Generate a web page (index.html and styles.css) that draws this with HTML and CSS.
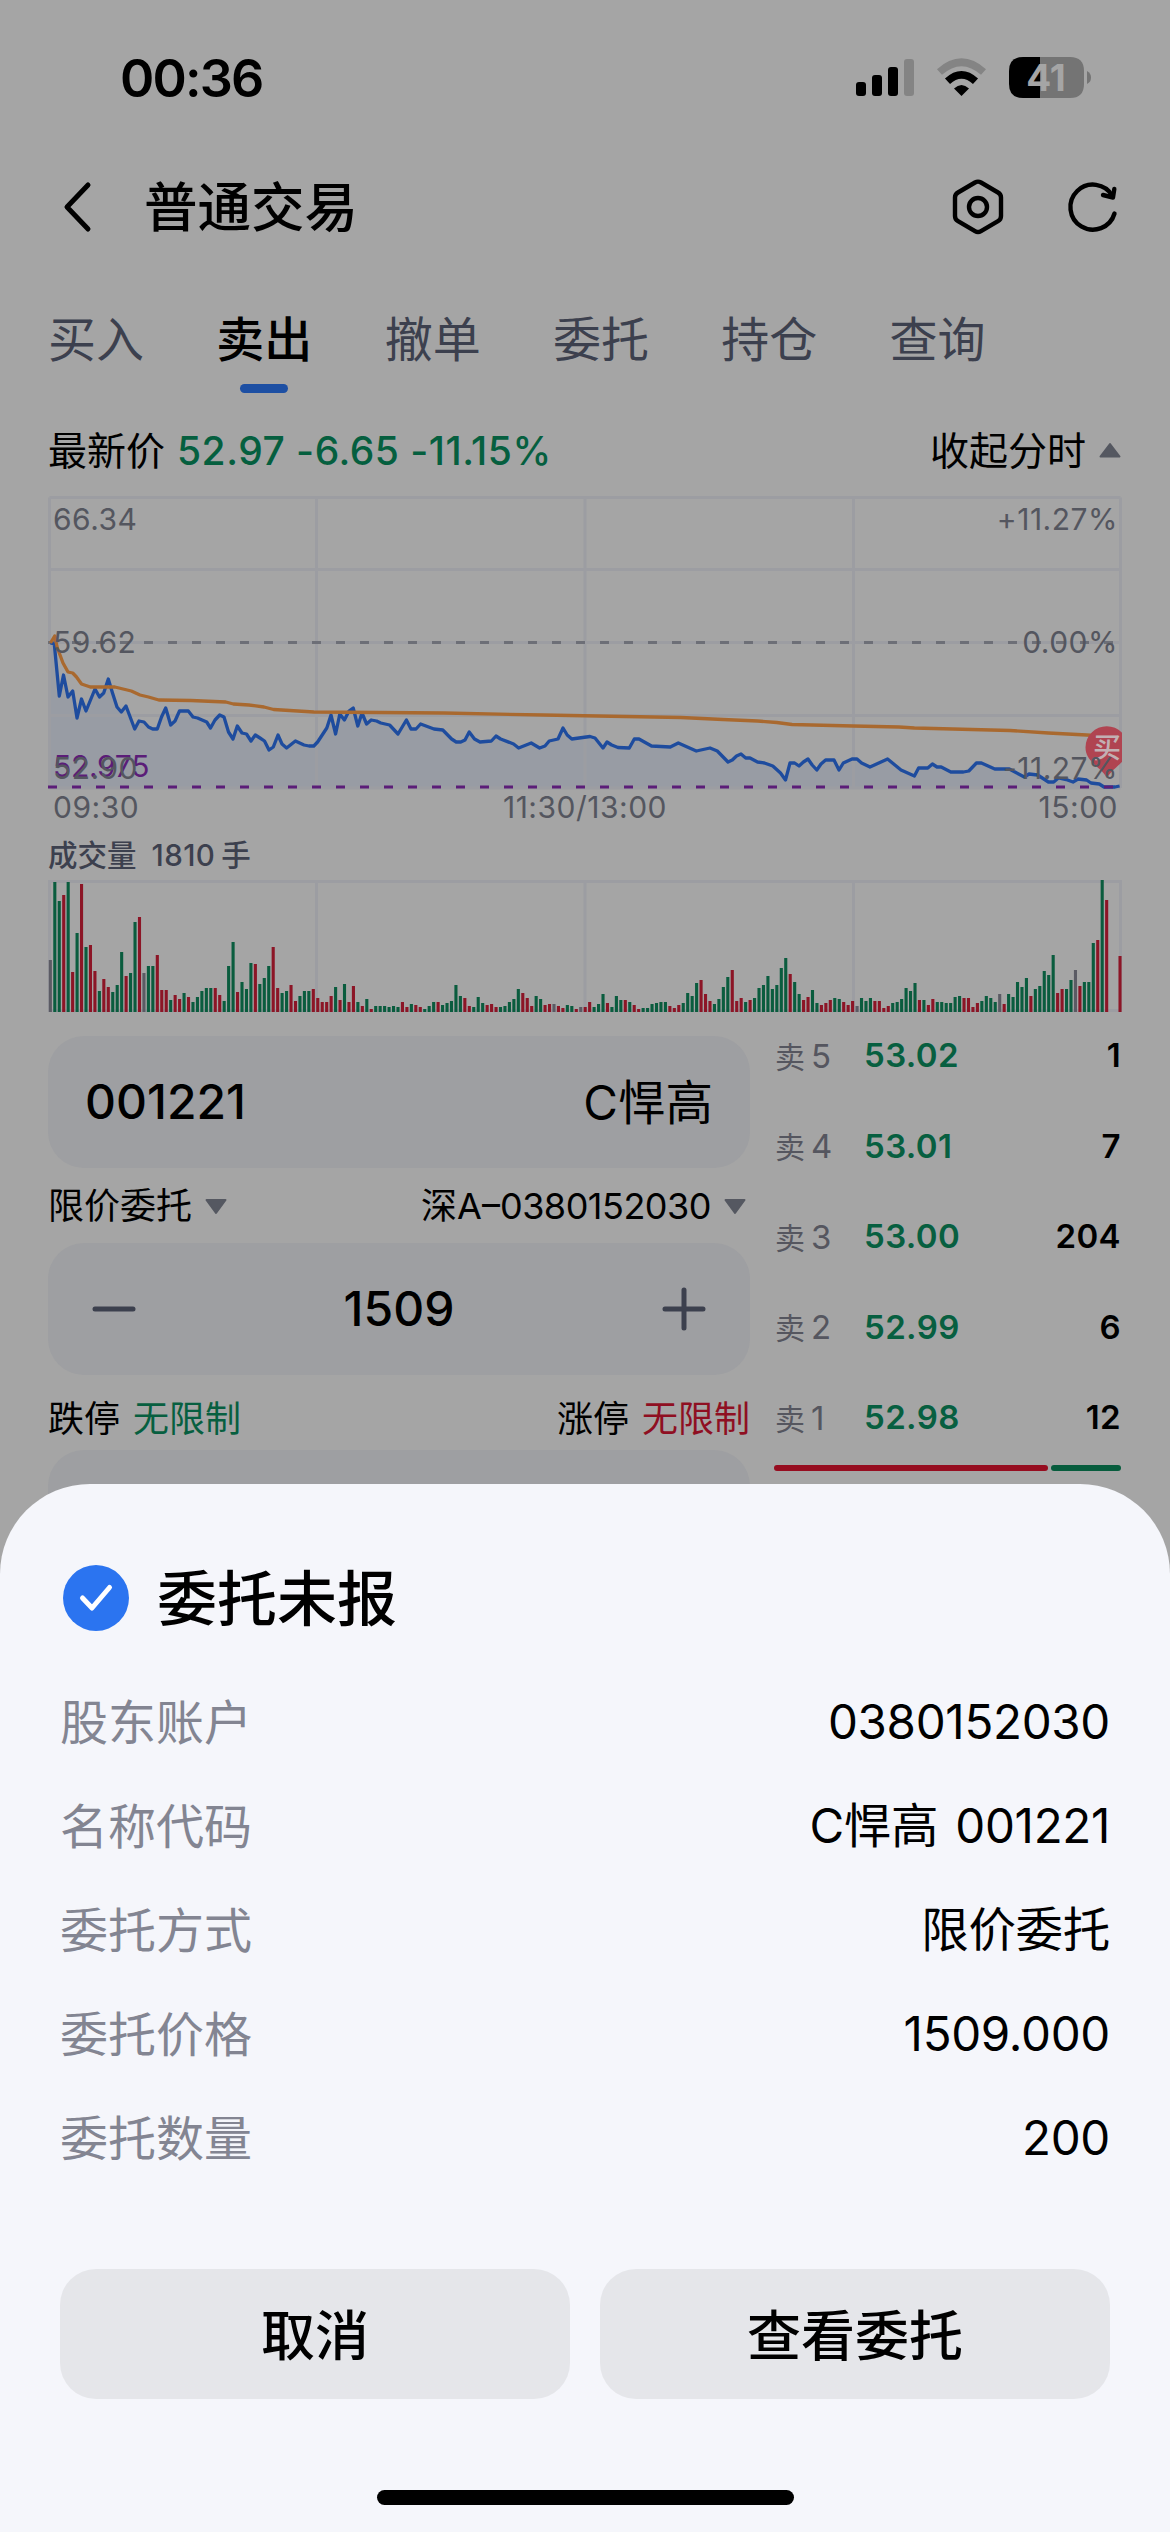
FILE: index.html
```html
<!DOCTYPE html>
<html lang="zh-CN">
<head>
  <meta charset="UTF-8" />
  <title>普通交易</title>
  <link rel="stylesheet" href="styles.css">
</head>
<body>

  <div class="screen">
    <div class="status">
      <span class="time">00:36</span>
      <svg class="status-icons" width="236" height="42" viewBox="856 57 236 42">
        <rect x="856" y="82" width="10" height="14" rx="3" />
        <rect x="872" y="75" width="10" height="21" rx="3" />
        <rect x="888" y="67" width="10" height="29" rx="3" />
        <rect x="904" y="59" width="10" height="37" rx="3" fill="#848484" />
        <path d="M939.5 72 Q961.5 52.500 983.500 72" fill="none" stroke="#848484" stroke-width="7.500" />
        <path d="M947.500 81.200 Q961.500 68.500 975.500 81.200" fill="none" stroke="#000" stroke-width="7.500" />
        <path d="M954 88.500 Q961.500 81.500 969 88.500 L961.500 96 Z" />
        <path d="M1040 57 H1070 Q1084 57 1084 71 V84 Q1084 98 1070 98 H1040 Z" fill="#747474" />
        <path d="M1040 57 H1023 Q1009 57 1009 71 V84 Q1009 98 1023 98 H1040 Z" />
        <path d="M1087 71 Q1091 73 1091 77.500 Q1091 82 1087 84 Z" fill="#747474" />
        <text class="battery-text" x="1046" y="91">41</text>
      </svg>
    </div>

    <div class="header">
      <svg class="back" width="30" height="52" viewBox="0 0 30 52"><path d="M26 4 L5 26 L26 48" /></svg>
      <h1>普通交易</h1>
      <svg width="54" height="58" viewBox="0 0 54 58">
        <path d="M24 4.500 Q27 2.800 30 4.500 L47 14.500 Q50 16.300 50 19.500 V38 Q50 41.500 47 43.200 L30 53.200 Q27 55 24 53.200 L7 43.200 Q4 41.500 4 38 V19.500 Q4 16.300 7 14.500 Z" />
        <circle cx="27" cy="29" r="9" />
      </svg>
      <svg class="refresh" width="54" height="58" viewBox="0 0 54 58">
        <path d="M48.500 35.500 A22.500 22.500 0 1 1 46.500 18" />
        <path d="M48.300 11 L47 19.500 L37 17" />
      </svg>
    </div>

    <div class="tabs">
      <div class="tab">买入</div>
      <div class="tab active">卖出</div>
      <div class="tab">撤单</div>
      <div class="tab">委托</div>
      <div class="tab">持仓</div>
      <div class="tab">查询</div>
    </div>

    <div class="quote">
      <span class="cn">最新价</span>
      <span class="quote-num">52.97 -6.65 -11.15%</span>
      <span class="toggle cn">收起分时</span>
      <svg width="24" height="18" viewBox="0 0 24 18"><path d="M12 3 L21.500 15.500 H2.500 Z" /></svg>
    </div>

    <svg class="chart" width="1074" height="346" viewBox="48 480 1074 346">
      <path id="area" class="area" />
      <path class="grid" d="M49.500 497.500 H1120.500 M49.500 569.500 H1120.500 M49.500 642.500 H1120.500 M49.500 715.500 H1120.500 M49.500 788 H1120.500 M49.500 497.500 V788 M316.500 497.500 V788 M585 497.500 V788 M853.500 497.500 V788 M1120.500 497.500 V788" />
      <path class="dash" d="M48 642.500 H1120" />
      <polyline id="price" class="price-line" />
      <polyline id="avg" class="avg-line" />
      <path class="dash dash-low" d="M48 787 H1120" />
      <path class="pin" d="M1107 778 C1101 767 1085.500 762 1085.500 747.500 A21 21 0 0 1 1128 747.500 C1128 762 1113 767 1107 778 Z" />
      <text class="pin-text" x="1107" y="758">买</text>
      <text x="53" y="530">66.34</text>
      <text x="53" y="653">59.62</text>
      <text x="53" y="777" class="low">52.975</text>
      <text x="53" y="779">52.90</text>
      <text x="1118" y="530" class="end">+11.27%</text>
      <text x="1118" y="653" class="end">0.00%</text>
      <text x="1118" y="779" class="end">-11.27%</text>
      <text x="53" y="818">09:30</text>
      <text x="585" y="818" class="mid">11:30/13:00</text>
      <text x="1118" y="818" class="end">15:00</text>
    </svg>

    <div class="volume-label">成交量<span class="volume-num">1810</span>手</div>
    <svg class="volume" width="1074" height="132" viewBox="48 880 1074 132">
      <path class="grid" d="M48 881.500 H1122 M49.500 881.500 V1012 M316.500 881.500 V1012 M585 881.500 V1012 M853.500 881.500 V1012 M1120.500 881.500 V1012 M48 1010.500 H1122" />
      <g id="bars"></g>
    </svg>

    <div class="trade">
      <div class="form">
        <div class="field">
          <span class="code">001221</span>
          <span class="name cn">C悍高</span>
        </div>
        <div class="options">
          <span class="cn">限价委托</span>
          <svg width="22" height="18" viewBox="0 0 22 18"><path d="M1.500 3 H20.500 L11 16 Z" /></svg>
          <span class="account cn">深A–<span class="account-num">0380152030</span></span>
          <svg width="22" height="18" viewBox="0 0 22 18"><path d="M1.500 3 H20.500 L11 16 Z" /></svg>
        </div>
        <div class="field stepper">
          <svg width="44" height="44" viewBox="0 0 44 44"><path d="M3 22 H41" /></svg>
          <span class="code">1509</span>
          <svg width="44" height="44" viewBox="0 0 44 44"><path d="M3 22 H41 M22 3 V41" /></svg>
        </div>
        <div class="limits">
          <span>跌停</span><span class="green">无限制</span>
          <span class="up">涨停</span><span class="red">无限制</span>
        </div>
        <div class="field"></div>
      </div>

      <div class="book">
        <div class="level"><span class="side">卖<b>5</b></span><span class="price">53.02</span><span class="qty">1</span></div>
        <div class="level"><span class="side">卖<b>4</b></span><span class="price">53.01</span><span class="qty">7</span></div>
        <div class="level"><span class="side">卖<b>3</b></span><span class="price">53.00</span><span class="qty">204</span></div>
        <div class="level"><span class="side">卖<b>2</b></span><span class="price">52.99</span><span class="qty">6</span></div>
        <div class="level"><span class="side">卖<b>1</b></span><span class="price">52.98</span><span class="qty">12</span></div>
        <div class="ratio"><i class="ratio-buy"></i><i class="ratio-sell"></i></div>
      </div>
    </div>

    <div class="sheet">
      <div class="sheet-title">
        <svg width="66" height="66" viewBox="0 0 66 66">
          <circle cx="33" cy="33" r="33" />
          <path d="M19.500 33 L29 43 L46.500 22.500" />
        </svg>
        <h2>委托未报</h2>
      </div>
      <div class="row"><span class="cn">股东账户</span><span class="value">0380152030</span></div>
      <div class="row"><span class="cn">名称代码</span><span class="value cn">C悍高 001221</span></div>
      <div class="row"><span class="cn">委托方式</span><span class="value cn">限价委托</span></div>
      <div class="row"><span class="cn">委托价格</span><span class="value">1509.000</span></div>
      <div class="row"><span class="cn">委托数量</span><span class="value">200</span></div>
      <div class="buttons">
        <button>取消</button>
        <button>查看委托</button>
      </div>
      <div class="home-bar"></div>
    </div>
  </div>

  <script src="chart.js"></script>
</body>
</html>
```
FILE: styles.css
```css
* {
  box-sizing: border-box;
}
body {
  margin: 0;
  background-color: #a5a5a5;
  font-family: Inter, "Noto Sans CJK SC", sans-serif;
  color: #000;
}
h1, h2 {
  margin: 0;
  font-weight: 500;
}
svg {
  display: block;
  flex: none;
}
.screen {
  position: relative;
  width: 1170px;
  height: 2532px;
  overflow: hidden;
  padding: 0 48px;
}
/* Chinese glyphs sit low next to Inter */
.cn {
  padding-bottom: 5px;
}

/* status bar */
.status {
  display: flex;
  align-items: center;
  justify-content: space-between;
  height: 156px;
  padding: 0 30px 0 72px;
}
.time {
  font-size: 52px;
  font-weight: 600;
  letter-spacing: -1.8px;
}
.battery-text {
  font-size: 37px;
  font-weight: 700;
  fill: #a5a5a5;
  text-anchor: middle;
}

/* header */
.header {
  display: flex;
  align-items: center;
  height: 102px;
  padding-left: 14px;
}
.header svg {
  fill: none;
  stroke: #000;
  stroke-width: 4.4;
  stroke-linecap: round;
  stroke-linejoin: round;
}
.header .back {
  stroke-width: 5;
}
.header h1 {
  flex: 1;
  margin-left: 52px;
  padding-top: 2px;
  font-size: 53.5px;
  line-height: 60px;
}
.header .refresh {
  margin: 0 2px 0 61px;
}

/* tabs */
.tabs {
  display: flex;
  gap: 72.3px;
  margin-top: 52px;
  height: 83px;
}
.tab {
  display: flex;
  flex-direction: column;
  align-items: center;
  gap: 14px;
  font-size: 48px;
  line-height: 60px;
  color: #3c404e;
}
.tab.active {
  font-weight: 500;
  color: #000;
}
.tab.active::after {
  content: "";
  width: 48px;
  height: 9px;
  border-radius: 4.5px;
  background-color: #1d4fa3;
}

/* latest price */
.quote {
  display: flex;
  align-items: center;
  height: 60px;
  margin-top: 27px;
  font-size: 39px;
}
.quote-num {
  margin-left: 12px;
  font-weight: 500;
  letter-spacing: 0.5px;
  color: #055f3f;
}
.toggle {
  margin-left: auto;
  margin-right: 12px;
}
.quote path, .options path {
  fill: #555861;
  stroke: #555861;
  stroke-width: 2;
  stroke-linejoin: round;
}

/* time-share chart */
.chart text {
  font-size: 30px;
  letter-spacing: 0.5px;
  fill: #54565f;
}
.chart .low {
  letter-spacing: -0.3px;
  fill: #5b1d78;
}
.chart .end {
  text-anchor: end;
}
.chart .mid {
  text-anchor: middle;
}
.chart .pin-text {
  font-size: 28px;
  font-weight: 500;
  letter-spacing: 0;
  fill: #c2b0b3;
  text-anchor: middle;
}
.grid {
  fill: none;
  stroke: #9c9da2;
  stroke-width: 3;
}
.area {
  fill: rgba(40, 76, 160, 0.1);
}
.dash {
  fill: none;
  stroke: #6d6f77;
  stroke-width: 3;
  stroke-dasharray: 9 15;
}
.dash-low {
  stroke: #5b1d78;
}
.price-line, .avg-line {
  fill: none;
  stroke: #1e4c9e;
  stroke-width: 3.3;
  stroke-linejoin: round;
}
.avg-line {
  stroke: #a9692f;
}
.pin {
  fill: #b04451;
}

/* volume */
.volume-label {
  height: 54px;
  padding-top: 2px;
  font-size: 29.5px;
  font-weight: 500;
  line-height: 54px;
  color: #3c404e;
}
.volume-num {
  margin: 0 6px 0 15px;
  letter-spacing: 0.4px;
}
.bar-g {
  fill: #0a5c3e;
}
.bar-r {
  fill: #8c1526;
}
.bar-n {
  fill: #5b5b64;
}

/* order form */
.trade {
  display: grid;
  grid-template-columns: 702px 347px;
  gap: 24px;
  margin-top: 24px;
}
.field {
  display: flex;
  align-items: center;
  justify-content: space-between;
  height: 132px;
  padding: 0 37px;
  border-radius: 36px;
  background-color: #9e9fa2;
}
.code {
  padding-bottom: 1px;
  font-size: 48px;
  font-weight: 500;
}
.name {
  font-size: 47.5px;
}
.stepper {
  padding: 0 44px;
}
.stepper path {
  stroke: #3c404e;
  stroke-width: 5;
  stroke-linecap: round;
}
.options {
  display: flex;
  align-items: center;
  height: 75px;
  padding-right: 4px;
  font-size: 36px;
}
.options svg {
  margin-left: 13px;
}
.account {
  margin-left: auto;
}
.account-num {
  letter-spacing: -0.5px;
}
.limits {
  display: flex;
  align-items: center;
  gap: 13px;
  height: 75px;
  padding-top: 6px;
  font-size: 36px;
}
.limits .up {
  margin-left: auto;
}
.green {
  color: #075f40;
}
.red {
  color: #8f0f22;
}

/* order book */
.book {
  margin-top: -26px;
}
.level {
  display: grid;
  grid-template-columns: 89px 1fr auto;
  align-items: center;
  height: 90.5px;
  padding-left: 1px;
  font-size: 33px;
  font-weight: 600;
}
.side {
  padding-bottom: 1px;
  font-size: 30px;
  font-weight: 400;
  color: #55565f;
}
.side b {
  margin-left: 6px;
  font-size: 33px;
  font-weight: 400;
}
.price {
  color: #075f40;
}
.qty, .price {
  letter-spacing: 0.4px;
}
.ratio {
  display: flex;
  gap: 3px;
  margin-top: 2.5px;
}
.ratio i {
  height: 6px;
  border-radius: 3px;
}
.ratio-buy {
  flex: 274;
  background-color: #960d20;
}
.ratio-sell {
  flex: 70;
  background-color: #075c3d;
}

/* result sheet */
.sheet {
  position: absolute;
  left: 0;
  top: 1484px;
  width: 1170px;
  height: 1048px;
  padding: 81px 60px 0;
  border-radius: 90px 90px 0 0;
  background-color: #f5f6fb;
}
.sheet-title {
  display: flex;
  align-items: center;
  height: 66px;
  padding-left: 3px;
  margin-bottom: 38px;
}
.sheet-title circle {
  fill: #2b74f0;
}
.sheet-title path {
  fill: none;
  stroke: #fff;
  stroke-width: 5;
  stroke-linecap: round;
  stroke-linejoin: round;
}
.sheet-title h2 {
  margin-left: 28px;
  padding-top: 2px;
  font-size: 60px;
  line-height: 66px;
}
.row {
  display: flex;
  align-items: center;
  justify-content: space-between;
  height: 104px;
  font-size: 48px;
  color: #838592;
}
.value {
  color: #000;
  font-size: 47.5px;
  letter-spacing: -0.3px;
  word-spacing: 4px;
}
.buttons {
  display: grid;
  grid-template-columns: 1fr 1fr;
  gap: 30px;
  margin-top: 80px;
}
button {
  height: 130px;
  padding: 0 0 4px;
  border: none;
  border-radius: 36px;
  background-color: #e5e6ea;
  font-family: inherit;
  font-size: 54px;
  font-weight: 500;
  color: #000;
}
.home-bar {
  width: 417px;
  height: 15px;
  margin: 91px auto 0;
  border-radius: 8px;
  background-color: #000;
}
```
FILE: chart.js
```javascript
const price = "50.5,643 54.3,644 59.3,696 63.5,675 68,697 72.7,691 77,718 81.5,699 86,711 95,689 99.5,697 103.7,693 108.3,679 112.5,693 117,707 121.3,712 126,706 134.7,729 139,721 144,722 148.5,727 152.7,729 157.3,729 161.5,717 165.7,708 170.7,725 175,721 179.5,711 188.3,711 193,717 197.5,718 206.7,722 210.5,728 215,720 219.7,715 224,717 228.5,732 233,739 237.3,726 242,733 246.5,734 251,741 255.3,735 260,738 264.5,741 269,750 273.3,747 278,735 282,744 286.6,748 295.4,741 304,745 309,746 313.8,746 317.6,742 326.8,728 331,715 335.6,734 339.8,714 344.4,720 349,711 353.2,708 357.8,726 362,713 366.6,724 371.2,720 376.6,721 380.8,723 389.6,725 398,734 406.4,720 411,729 416,729 420.6,724 434,729 442.8,730 451.6,739 456.2,742 460.8,742 465,740 469.2,732 474.5,739 480,742 491.4,741 496,736 500.6,739 513.6,744 518.6,748 531.2,743 539.6,748 545,746 549.2,741 558,739 563,728 567.2,735 571.8,739 590,736.5 595,738 603,748 607,742 611.7,745 618,747.5 629.3,748 634.3,739 639,739 651.5,746 670.3,747 678.3,743 696.3,751 710,748 717.3,751 728,762 732.3,760 736.5,756 741,754 745.7,758 750,758 757.5,762 764.4,763 772.8,766 780.5,773 785.5,780 790,763 794.6,763 799,766 803.4,762 808,759 812.2,765 816.8,770 821,764 825.6,760 834,760 839,770 843.3,763 852,759 857,759 861.6,763 870,767 887.6,759 901,770 914.4,776 918.6,768 927.8,768 932.4,764 937,767 941.2,767 950.8,772 963.4,772 968.8,771 976.4,763 981.4,763 994.8,769 1009.3,769 1024.3,777 1029,774 1037.7,775 1048.4,782 1053.7,782 1058.3,778 1067.5,780 1073,782 1078,779 1086.6,780 1091,783 1099.3,784 1104,787 1115,787 1119.6,786";

const avg = "50.5,643 54.7,636 57.4,648 63,663 68,672 72.7,673 76.5,677 81.5,684 90.3,687 114.8,687 131.3,691 140,695 148.5,697 158.8,700 191,700.5 225.8,702 233.4,704 248.8,705 264,707 273.6,709.5 313.8,712 444,713 543.4,715 570,715.5 681,717.5 723,719.5 757.5,721 776.7,722.5 792,724.5 853,726 899,727 914.4,728 1010,730.5 1048.4,733 1086.6,735 1121,737";

// g = 绿, r = 红, n = 平
const volume = "n52 g130 g111 r117 g130 r40 g79 r128 g65 r67 r41 g21 r33 r25 g20 g27 g60 r36 g39 g90 r95 n39 g46 g46 r57 r22 r22 g12 r17 r13 g19 r15 g10 g15 g21 g24 g24 r24 r17 g11 g46 g70 r20 g30 g23 g49 r48 g28 g34 g46 r65 r24 g19 g21 r27 r11 g16 g21 g21 r23 r14 r10 r10 r16 g25 r12 g28 r10 r26 g10 r6 g13 r3 g6 g6 g6 g5 g6 g5 r10 r5 g8 r7 r5 g3 g6 g10 r10 g7 g9 g11 g27 g16 r14 r6 g5 g15 g9 r7 r8 r5 g5 g6 g10 g13 g23 r19 r14 r6 g16 g13 r7 r8 n8 r6 r4 g7 g6 r3 n5 r5 r10 g5 g8 g18 r9 g5 g16 g12 r12 g10 r7 r3 g4 g4 g8 g9 g10 g10 r6 r4 r7 g9 g19 g16 g29 r32 r18 r11 g8 g13 g25 g35 r42 r11 r14 g10 r12 g14 g24 g27 g36 g23 g27 g44 g54 r38 g30 g18 r12 r15 g22 g9 r7 r9 r12 g14 g13 r10 r7 r11 n6 g14 g11 g14 r11 r11 r4 r6 g9 g10 g13 g24 g21 g29 r12 g12 r7 r13 g10 g10 g9 g9 g15 g16 r14 r14 r5 r9 g11 g16 g14 g10 n18 r8 g18 g15 g30 g25 g34 r16 g23 g26 g41 g37 g57 r19 r23 g23 g32 n42 r26 g30 g30 g69 r72 g132 r112 n0 n0 r56";

document.getElementById("price").setAttribute("points", price);
document.getElementById("avg").setAttribute("points", avg);
document.getElementById("area").setAttribute("d", `M50.5 788 L${price} L1119.6 788 Z`);

const step = 4.457;
document.getElementById("bars").innerHTML = volume.split(" ").map((v, i) => {
  const h = Number(v.slice(1));
  const x = (48.8 + i * step).toFixed(2);
  return `<rect class="bar-${v[0]}" x="${x}" y="${1012 - h}" width="3.1" height="${h}" />`;
}).join("");
```
